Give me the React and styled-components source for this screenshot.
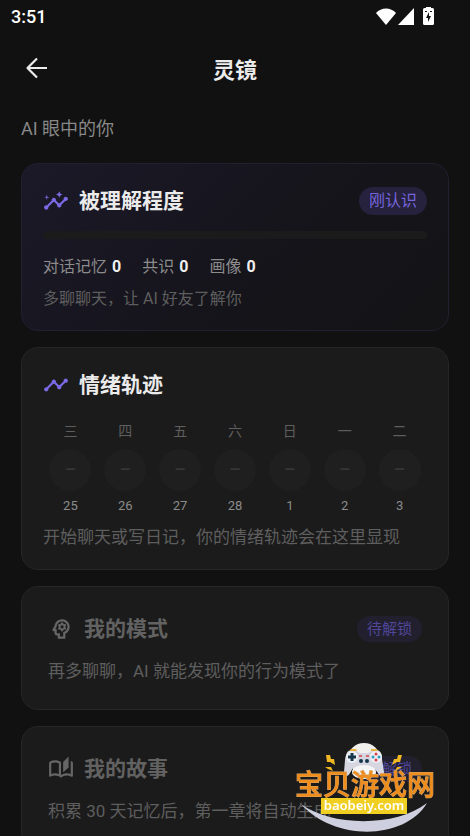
import React from "react";
import styled, { createGlobalStyle } from "styled-components";
import {
  MdInsights,
  MdTimeline,
  MdOutlinePsychology,
  MdOutlineAutoStories,
} from "react-icons/md";

const GlobalStyle = createGlobalStyle`
  * {
    box-sizing: border-box;
  }

  body {
    margin: 0;
    background: #111111;
    color: #ebebeb;
    font-family: Roboto, "Noto Sans CJK SC", sans-serif;
  }
`;

const Screen = styled.div`
  height: 100vh;
  display: flex;
  flex-direction: column;
  overflow: hidden;
`;

const StatusBar = styled.div`
  flex: none;
  height: 32px;
  padding: 0 36px 0 11px;
  display: flex;
  align-items: center;
  justify-content: space-between;
  color: #ffffff;
  font-size: 18px;
  font-weight: 500;
`;

const StatusIcons = styled.div`
  display: flex;
  align-items: center;
  gap: 2px;

  svg:last-child {
    margin-left: 7px;
  }
`;

const Header = styled.header`
  flex: none;
  height: 78px;
  padding: 0 21px;
  display: grid;
  grid-template-columns: 32px 1fr 32px;
  align-items: center;
`;

const BackButton = styled.button`
  width: 32px;
  height: 32px;
  padding: 0;
  border: none;
  background: none;
  color: #ebebeb;
  cursor: pointer;

  svg {
    display: block;
  }
`;

const Title = styled.h1`
  margin: 0;
  font-size: 22px;
  line-height: 32px;
  font-weight: 700;
  text-align: center;
`;

const Content = styled.main`
  flex: 1;
  min-height: 0;
  padding: 7px 21px 24px;
  display: flex;
  flex-direction: column;
  gap: 16px;
  overflow-y: auto;
  scrollbar-width: none;
`;

const Subtitle = styled.p`
  margin: 0 0 6px;
  color: #888888;
  font-size: 18px;
  line-height: 24px;
`;

const Card = styled.section`
  flex: none;
  padding: ${(props) => (props.$locked ? "26px" : "21px")};
  border: 1px solid ${(props) => (props.$accent ? "#211f30" : "#262626")};
  border-radius: 17px;
  background: ${(props) =>
    props.$accent
      ? "linear-gradient(135deg, #1b1928 0%, #15141a 60%, #141416 100%)"
      : "#1b1b1b"};
`;

const CardHead = styled.div`
  height: 32px;
  display: flex;
  align-items: center;
  gap: 10px;
  color: ${(props) => (props.$locked ? "#666666" : "#7b6ae6")};

  svg {
    flex: none;
  }
`;

const CardTitle = styled.h2`
  margin: 0;
  flex: 1;
  color: ${(props) => (props.$locked ? "#626262" : "#ebebeb")};
  font-size: 21px;
  line-height: 32px;
  font-weight: 700;
`;

const Badge = styled.span`
  padding: 0 10px;
  border-radius: 14px;
  background: ${(props) => (props.$locked ? "#22202e" : "#26213c")};
  color: ${(props) => (props.$locked ? "#50469a" : "#7565dc")};
  font-size: ${(props) => (props.$locked ? "15px" : "16px")};
  line-height: ${(props) => (props.$locked ? "26px" : "28px")};
`;

const Progress = styled.div`
  height: 8px;
  margin-top: 14px;
  border-radius: 4px;
  background: #1b1b1b;
`;

const Stats = styled.div`
  margin-top: 16px;
  display: flex;
  gap: 21px;
  color: #8c8c8c;
  font-size: 16px;
  line-height: 24px;

  strong {
    margin-left: 5px;
    color: #f0f0f0;
    font-weight: 700;
  }
`;

const Hint = styled.p`
  margin: ${(props) => (props.$small ? "9px" : "11px")} 0 0;
  color: #5e5e5e;
  font-size: ${(props) => (props.$small ? "16px" : "17px")};
  line-height: ${(props) => (props.$small ? "21px" : "22px")};
  white-space: nowrap;
`;

const LockedHint = styled(Hint)`
  margin-top: 14px;
  line-height: 24px;
`;

const Week = styled.div`
  margin-top: 20px;
  display: grid;
  grid-template-columns: repeat(7, 1fr);
`;

const Day = styled.div`
  display: flex;
  flex-direction: column;
  align-items: center;
`;

const DayName = styled.span`
  color: #5e5e5e;
  font-size: 14px;
  line-height: 20px;
`;

const Mood = styled.span`
  width: 42px;
  height: 42px;
  margin: 8px 0 6px;
  border-radius: 50%;
  background: #1f1f1f;
  color: #363636;
  font-size: 18px;
  line-height: 42px;
  font-weight: 500;
  text-align: center;
`;

const DayDate = styled.span`
  color: #8c8c8c;
  font-size: 13px;
  line-height: 18px;
`;

const Watermark = styled.div`
  position: fixed;
  right: 30px;
  bottom: 2px;
  width: 150px;
  height: 94px;
  pointer-events: none;

  svg {
    position: absolute;
    inset: 0;
  }
`;

const BrandName = styled.div`
  position: absolute;
  top: 29px;
  left: 5px;
  color: #ee8d1c;
  font-family: "Noto Sans CJK SC", sans-serif;
  font-size: 28px;
  line-height: 28px;
  font-weight: 500;
  white-space: nowrap;
  -webkit-text-stroke: 1px #d9a66c;
  paint-order: stroke fill;
`;

const BrandUrl = styled.div`
  position: absolute;
  top: 58px;
  left: 31px;
  width: 86px;
  height: 16px;
  background: #f0cf22;
  color: #ffffff;
  font-family: "Noto Sans", sans-serif;
  font-size: 13px;
  line-height: 15px;
  font-weight: 600;
  text-align: center;
`;

const week = [
  { name: "三", date: 25 },
  { name: "四", date: 26 },
  { name: "五", date: 27 },
  { name: "六", date: 28 },
  { name: "日", date: 1 },
  { name: "一", date: 2 },
  { name: "二", date: 3 },
];

const stats = [
  { label: "对话记忆", value: 0 },
  { label: "共识", value: 0 },
  { label: "画像", value: 0 },
];

const LockedCard = ({ icon: Icon, title, hint }) => (
  <Card $locked>
    <CardHead $locked>
      <Icon size={26} />
      <CardTitle $locked>{title}</CardTitle>
      <Badge $locked>待解锁</Badge>
    </CardHead>
    <LockedHint>{hint}</LockedHint>
  </Card>
);

const Brand = () => (
  <Watermark>
    <svg width="150" height="94" viewBox="0 0 150 94">
      <path d="M11 64C40 86 105 88 137 63C115 100 45 102 11 64Z" fill="#cfd0df" />
      <ellipse cx="74" cy="18" rx="16" ry="15" fill="#f1f0ed" />
      <path
        d="M62 10C57 10 56 14 55 20L54 32C54 37 58 37 60 33L63 28H84L88 33C90 37 94 37 94 32L92 19C92 13 90 10 86 10C82 10 80 12 78 13H70C68 12 66 10 62 10Z"
        fill="#d5d6e0"
      />
      <path d="M60 10L61 9H66L67 11H60ZM81 9H86L88 11H81Z" fill="#e9b23b" />
      <ellipse cx="74" cy="32" rx="12" ry="7" fill="#f5f5f3" />
      <circle cx="62" cy="17" r="6" fill="#eeeff5" />
      <circle cx="86" cy="17" r="6" fill="#eeeff5" />
      <path d="M62 13V21M58 17H66" stroke="#17364b" strokeWidth="3" />
      <circle cx="86" cy="14" r="1.500" fill="#d8424a" />
      <circle cx="86" cy="20" r="1.500" fill="#d8424a" />
      <circle cx="83" cy="17" r="1.500" fill="#2c9dba" />
      <circle cx="89" cy="17" r="1.500" fill="#2c9dba" />
      <path d="M69 16H72M76 16H79" stroke="#d8424a" strokeWidth="1.500" />
      <circle cx="71" cy="21" r="2" fill="#17364b" />
      <circle cx="77" cy="21" r="2" fill="#17364b" />
      <path
        d="M36 15L40 15L41 19L44 19L45 25L40 22L37 22ZM35 27L41 27L43 31L38 29Z"
        fill="#efb823"
      />
      <path
        d="M112 15L108 15L107 19L104 19L102 25L107 22L110 22ZM112 27L107 27L105 31L109 29Z"
        fill="#efb823"
      />
    </svg>
    <BrandName>宝贝游戏网</BrandName>
    <BrandUrl>baobeiy.com</BrandUrl>
  </Watermark>
);

const App = () => (
  <>
    <GlobalStyle />
    <Screen>
      <StatusBar>
        <span>3:51</span>
        <StatusIcons>
          <svg width="20" height="17" viewBox="0 0 20 17" fill="currentColor">
            <path d="M10 17L0 5C5-1 15-1 20 5Z" />
          </svg>
          <svg width="16" height="17" viewBox="0 0 16 17" fill="currentColor">
            <path d="M16 0V17H0Z" />
          </svg>
          <svg width="11" height="18" viewBox="0 0 11 18">
            <path
              d="M3 0H8V1H9.500Q11 1 11 2.500V16.500Q11 18 9.500 18H1.500Q0 18 0 16.500V2.500Q0 1 1.500 1H3Z"
              fill="currentColor"
            />
            <path d="M6 5L3 11H5V15L8 9H6ZM2 4H4V5H2ZM7 4H9V5H7Z" fill="#111111" />
          </svg>
        </StatusIcons>
      </StatusBar>
      <Header>
        <BackButton aria-label="返回">
          <svg width="32" height="32" viewBox="0 0 32 32" fill="none">
            <path
              d="M26 13H7M16 3.500L6.500 13L16 22.500"
              stroke="currentColor"
              strokeWidth="2.200"
              strokeLinejoin="round"
            />
          </svg>
        </BackButton>
        <Title>灵镜</Title>
      </Header>
      <Content>
        <Subtitle>AI 眼中的你</Subtitle>
        <Card $accent>
          <CardHead>
            <MdInsights size={26} />
            <CardTitle>被理解程度</CardTitle>
            <Badge>刚认识</Badge>
          </CardHead>
          <Progress role="progressbar" aria-label="被理解程度" aria-valuenow={0} />
          <Stats>
            {stats.map((stat) => (
              <span key={stat.label}>
                {stat.label}
                <strong>{stat.value}</strong>
              </span>
            ))}
          </Stats>
          <Hint $small>多聊聊天，让 AI 好友了解你</Hint>
        </Card>
        <Card>
          <CardHead>
            <MdTimeline size={26} />
            <CardTitle>情绪轨迹</CardTitle>
          </CardHead>
          <Week>
            {week.map((day) => (
              <Day key={day.date}>
                <DayName>{day.name}</DayName>
                <Mood>–</Mood>
                <DayDate>{day.date}</DayDate>
              </Day>
            ))}
          </Week>
          <Hint>开始聊天或写日记，你的情绪轨迹会在这里显现</Hint>
        </Card>
        <LockedCard
          icon={MdOutlinePsychology}
          title="我的模式"
          hint="再多聊聊，AI 就能发现你的行为模式了"
        />
        <LockedCard
          icon={MdOutlineAutoStories}
          title="我的故事"
          hint="积累 30 天记忆后，第一章将自动生成"
        />
      </Content>
    </Screen>
    <Brand />
  </>
);

export default App;
